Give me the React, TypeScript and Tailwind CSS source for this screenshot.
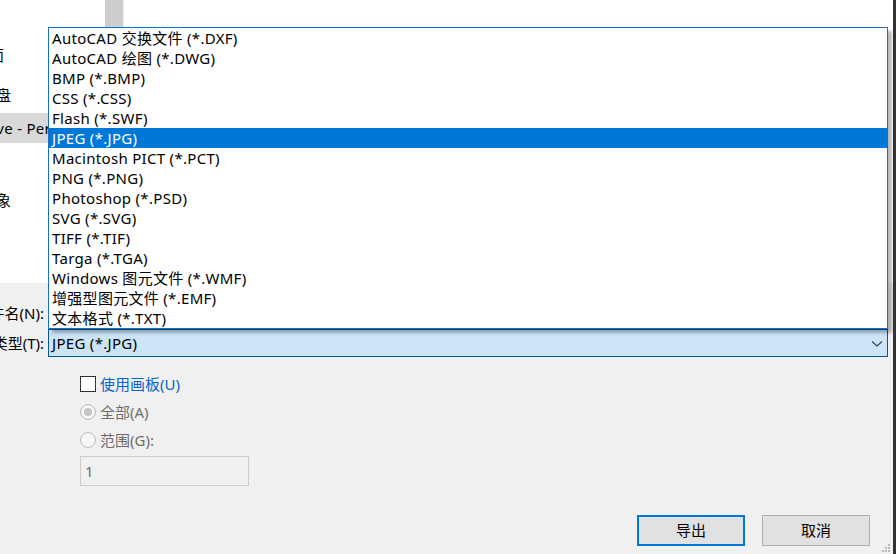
import React from "react";

const items = [
  "AutoCAD 交换文件 (*.DXF)",
  "AutoCAD 绘图 (*.DWG)",
  "BMP (*.BMP)",
  "CSS (*.CSS)",
  "Flash (*.SWF)",
  "JPEG (*.JPG)",
  "Macintosh PICT (*.PCT)",
  "PNG (*.PNG)",
  "Photoshop (*.PSD)",
  "SVG (*.SVG)",
  "TIFF (*.TIF)",
  "Targa (*.TGA)",
  "Windows 图元文件 (*.WMF)",
  "增强型图元文件 (*.EMF)",
  "文本格式 (*.TXT)",
];

export default function App() {
  return (
    <div className="w-[896px] h-[554px] flex overflow-hidden text-[15px] text-black font-['Noto_Sans','Noto_Sans_CJK_SC',sans-serif]">
      <div className="relative w-[893px] h-full flex flex-col">
        {/* top white area: nav pane + file list */}
        <div className="h-[283px] bg-white flex">
          <div className="w-[105px] flex flex-col overflow-hidden whitespace-nowrap">
            <div className="h-[2px] overflow-hidden flex items-end">
              <span className="leading-[24px] ml-[-20px]">此电脑中的文件夹</span>
            </div>
            <div className="mt-[43px] h-[20px] flex items-center">
              <div className="w-[4px] flex justify-end overflow-hidden">
                <span>桌面</span>
              </div>
            </div>
            <div className="mt-[20px] h-[20px] flex items-center">
              <div className="w-[11px] flex justify-end overflow-hidden">
                <span>本地磁盘</span>
              </div>
            </div>
            <div className="mt-[8px] h-[30px] bg-[#d9d9d9] flex items-center">
              <span className="ml-[-56px] tracking-[0.3px]">OneDrive - Personal</span>
            </div>
            <div className="mt-[47px] h-[20px] flex items-center">
              <div className="w-[11px] flex justify-end overflow-hidden">
                <span>3D 对象</span>
              </div>
            </div>
          </div>
          <div className="w-[18px] flex flex-col">
            <div className="h-[40px] bg-[#cdcdcd]" />
          </div>
          <div className="w-[1px] bg-[#ececec]" />
          <div className="flex-1 bg-white" />
        </div>

        {/* bottom gray area */}
        <div className="flex-1 bg-[#f0f0f0] flex flex-col">
          <div className="mt-[17px] h-[26px] flex items-center">
            <div className="w-[48px] flex justify-end overflow-hidden whitespace-nowrap pr-[4px]">
              <span>文件名(N):</span>
            </div>
            <div className="w-[840px] h-full bg-white border border-[#7a7a7a]" />
          </div>
          <div className="mt-[3px] h-[28px] flex items-center">
            <div className="w-[48px] flex justify-end overflow-hidden whitespace-nowrap pr-[4px]">
              <span>保存类型(T):</span>
            </div>
            <div className="w-[840px] h-full bg-[#cce4f7] border border-[#005499] flex items-center justify-between pl-[3px] pr-[4px]">
              <span className="tracking-[0.3px]">JPEG (*.JPG)</span>
              <svg width="12" height="8" viewBox="0 0 12 8" className="mt-[1px]">
                <path d="M1 1.5 L6 6 L11 1.5" fill="none" stroke="#404040" strokeWidth="1.2" />
              </svg>
            </div>
          </div>

          <div className="ml-[80px] mt-[19px] flex flex-col">
            <div className="h-[16px] flex items-center gap-[4px]">
              <div className="w-[16px] h-[16px] border border-[#333333] bg-white" />
              <span className="text-[#0a63c9] leading-none">使用画板(U)</span>
            </div>
            <div className="mt-[12px] h-[16px] flex items-center gap-[4px]">
              <div className="w-[16px] h-[16px] rounded-full border border-[#bcbcbc] bg-[#f4f4f4] flex items-center justify-center">
                <div className="w-[8px] h-[8px] rounded-full bg-[#c6c6c6]" />
              </div>
              <span className="text-[#6d6d6d] leading-none">全部(A)</span>
            </div>
            <div className="mt-[12px] h-[16px] flex items-center gap-[4px]">
              <div className="w-[16px] h-[16px] rounded-full border border-[#bcbcbc] bg-[#f8f8f8]" />
              <span className="text-[#6d6d6d] leading-none">范围(G):</span>
            </div>
            <div className="mt-[8px] w-[169px] h-[30px] border border-[#cccccc] bg-[#f0f0f0] flex items-center pl-[4px] text-[#6d6d6d]">
              1
            </div>
          </div>

          <div className="mt-auto mb-[8px] flex justify-end gap-[17px] pr-[23px]">
            <button className="w-[108px] h-[31px] bg-[#e1e1e1] border-2 border-[#0078d7] flex items-center justify-center">
              导出
            </button>
            <button className="w-[108px] h-[31px] bg-[#e1e1e1] border border-[#adadad] flex items-center justify-center">
              取消
            </button>
          </div>
        </div>

        {/* dropdown popup */}
        <div className="absolute left-[48px] top-[27px] w-[840px] h-[302px] bg-white border border-[#1a6fc2] shadow-[4px_4px_3px_rgba(0,0,0,0.28)] flex flex-col">
          {items.map((t, i) => (
            <div
              key={t}
              className={
                i === 5
                  ? "h-[20px] flex items-center pl-[3px] whitespace-nowrap tracking-[0.3px] bg-[#0078d7] text-white"
                  : "h-[20px] flex items-center pl-[3px] whitespace-nowrap tracking-[0.3px]"
              }
            >
              {t}
            </div>
          ))}
        </div>

        {/* resize grip */}
        <svg className="absolute right-[2px] bottom-[1px]" width="9" height="9" viewBox="0 0 9 9">
          <rect x="6" y="0" width="2" height="2" fill="#b8b8b8" />
          <rect x="3" y="3" width="2" height="2" fill="#b8b8b8" />
          <rect x="6" y="3" width="2" height="2" fill="#b8b8b8" />
          <rect x="0" y="6" width="2" height="2" fill="#b8b8b8" />
          <rect x="3" y="6" width="2" height="2" fill="#b8b8b8" />
          <rect x="6" y="6" width="2" height="2" fill="#b8b8b8" />
        </svg>
      </div>
      <div className="w-[3px] h-full bg-[#333333]" />
    </div>
  );
}
